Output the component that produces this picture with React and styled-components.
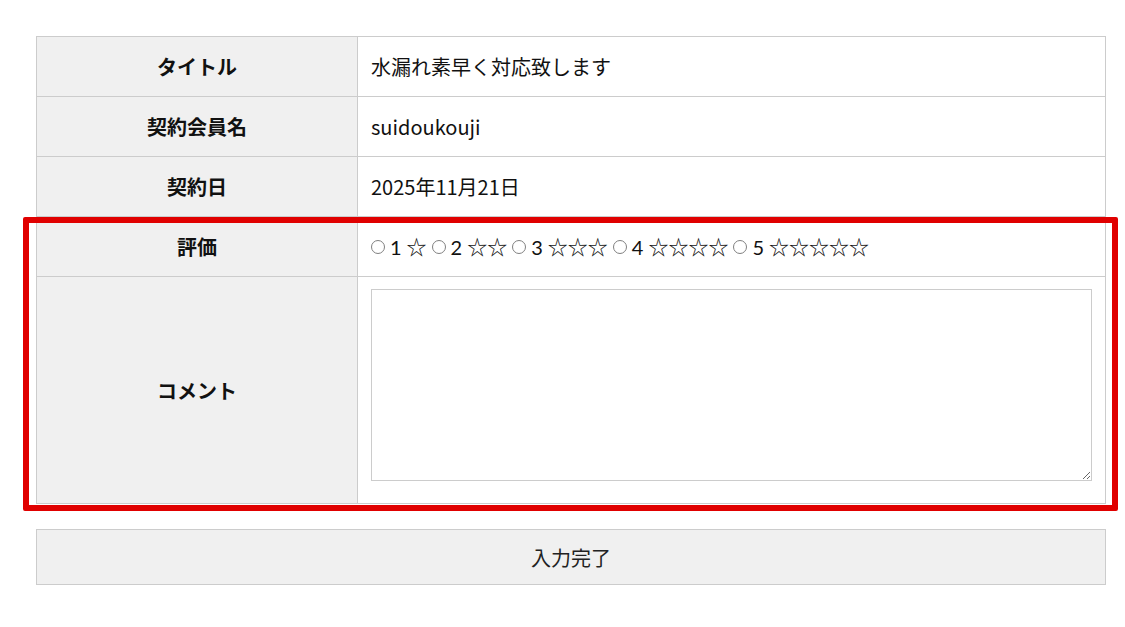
import React from "react";
import styled, { createGlobalStyle } from "styled-components";

const Global = createGlobalStyle`
  html, body { margin: 0; padding: 0; background: #fff; }
  body { font-family: "Noto Sans CJK JP", "Noto Sans", sans-serif; color: #111; }
`;

const Page = styled.div`
  padding: 36px 19px 40px 36px;
  position: relative;
`;

const Table = styled.table`
  width: 1070px;
  border-collapse: collapse;
  font-size: 20px;
  table-layout: fixed;
`;

const Th = styled.th`
  width: 321px;
  background: #f0f0f0;
  border: 1px solid #ccc;
  font-weight: 700;
  text-align: center;
  height: ${(p) => p.$h || 59}px;
  padding: 0 12px;
  box-sizing: border-box;
`;

const Td = styled.td`
  border: 1px solid #ccc;
  padding: ${(p) => (p.$pad ? "12px 13px 22px 13px" : "0 13px")};
  height: 59px;
  vertical-align: ${(p) => (p.$pad ? "top" : "middle")};
`;

const Radios = styled.div`
  display: flex;
  align-items: center;
  white-space: nowrap;
  font-family: "Lato", "Noto Sans CJK JP", sans-serif;
`;

const RadioLabel = styled.label`
  display: inline-flex;
  align-items: center;
  flex: none;
`;

const Radio = styled.input`
  appearance: none;
  -webkit-appearance: none;
  flex: none;
  width: 14px;
  height: 14px;
  box-sizing: border-box;
  border: 1px solid #808080;
  border-radius: 50%;
  background: #fff;
  margin: 0 5px 0 0;
  &:checked {
    background: radial-gradient(circle, #1a73e8 0 3px, #fff 3.5px);
    border-color: #1a73e8;
  }
`;

const Num = styled.span`
  margin-right: 5px;
`;

const Stars = styled.span`
  font-family: "Noto Sans CJK JP", sans-serif;
  margin-right: 5px;
`;

const TextArea = styled.textarea`
  display: block;
  width: 100%;
  height: 192px;
  box-sizing: border-box;
  border: 1px solid #ccc;
  resize: both;
  font-family: inherit;
  font-size: 16px;
`;

const Button = styled.button`
  display: block;
  margin-top: 25px;
  width: 1070px;
  height: 56px;
  background: #f0f0f0;
  border: 1px solid #ccc;
  font-family: "Noto Sans CJK JP", sans-serif;
  font-size: 20px;
  color: #222;
`;

const Highlight = styled.div`
  position: absolute;
  left: 23px;
  top: 217px;
  width: 1095px;
  height: 294px;
  box-sizing: border-box;
  border: 6px solid #e00000;
  border-radius: 2px;
  pointer-events: none;
`;

export default function App() {
  const rows = [
    ["タイトル", "水漏れ素早く対応致します"],
    ["契約会員名", "suidoukouji"],
    ["契約日", "2025年11月21日"],
  ];
  return (
    <Page>
      <Global />
      <Table>
        <tbody>
          {rows.map(([k, v]) => (
            <tr key={k}>
              <Th>{k}</Th>
              <Td>{v}</Td>
            </tr>
          ))}
          <tr>
            <Th>評価</Th>
            <Td>
              <Radios>
                {[1, 2, 3, 4, 5].map((n) => (
                  <RadioLabel key={n}>
                    <Radio type="radio" name="rate" />
                    <Num>{n}</Num>
                    <Stars>{"☆".repeat(n)}</Stars>
                  </RadioLabel>
                ))}
              </Radios>
            </Td>
          </tr>
          <tr>
            <Th $h={227}>コメント</Th>
            <Td $pad>
              <TextArea />
            </Td>
          </tr>
        </tbody>
      </Table>
      <Button>入力完了</Button>
      <Highlight />
    </Page>
  );
}
